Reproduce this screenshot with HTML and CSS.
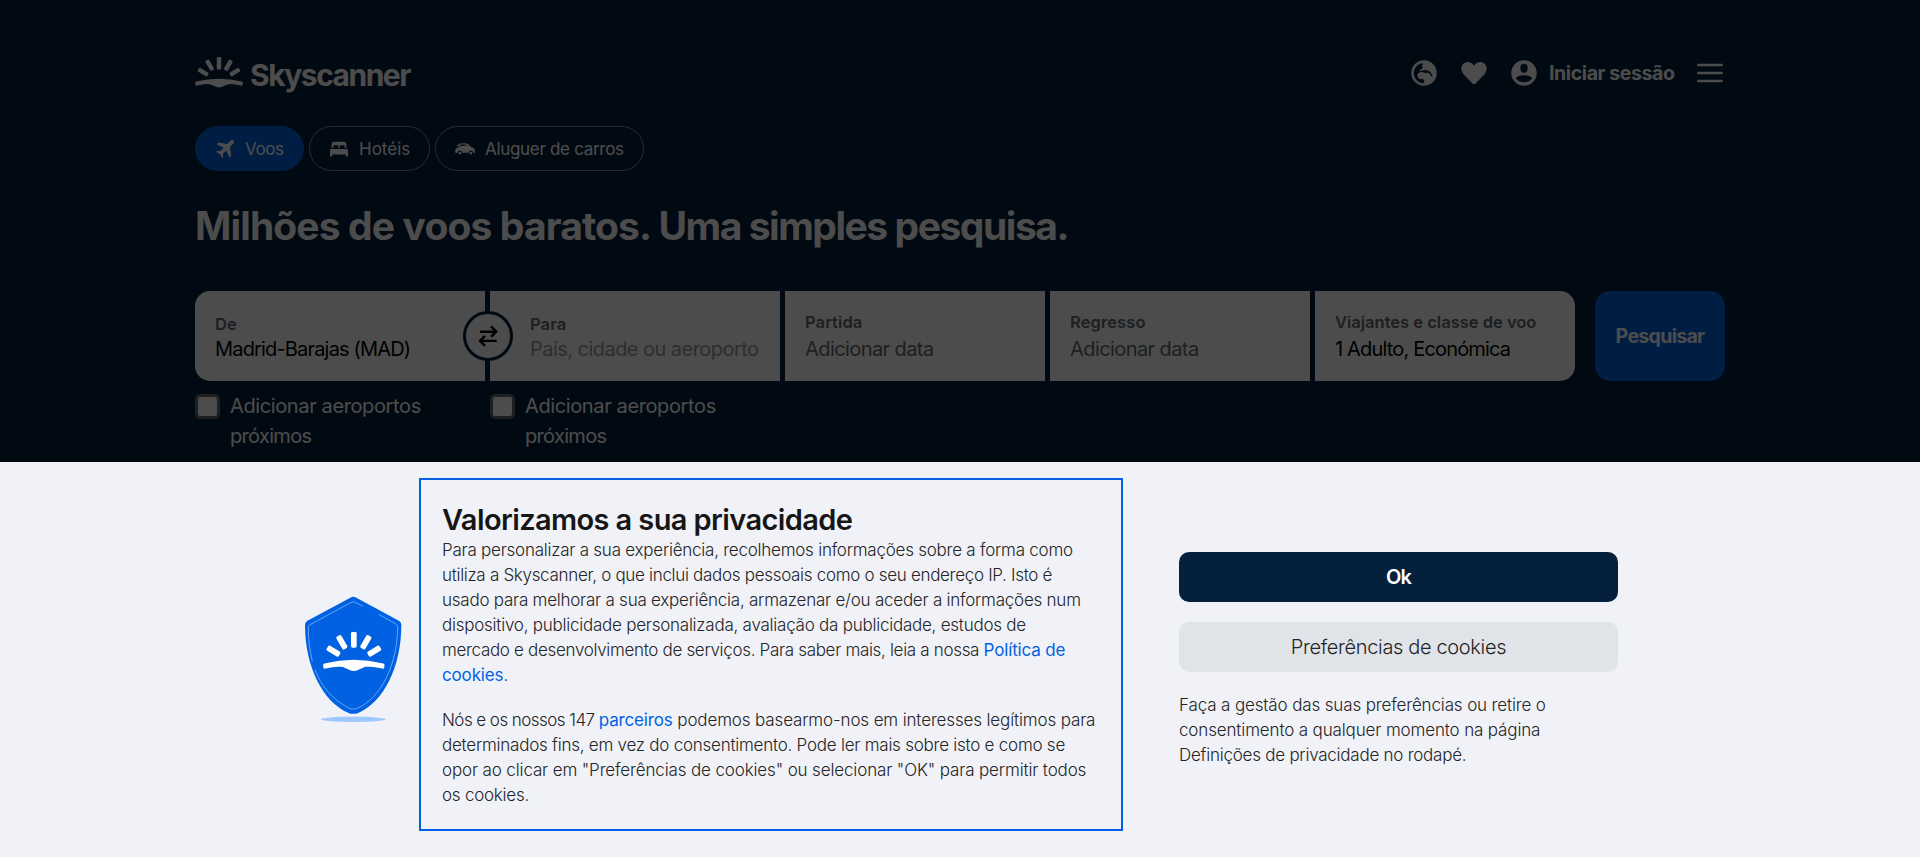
FILE: index.html
```html
<!DOCTYPE html>
<html lang="pt">
<head>
<meta charset="utf-8">
<title>Skyscanner</title>
<link rel="stylesheet" href="styles.css">
</head>
<body>
<svg class="defs" aria-hidden="true">
  <symbol id="sunrise" viewBox="0 0 48 31">
    <rect x="21.8" y="0" width="4.4" height="12.4" rx="1.2"/>
    <rect x="21.8" y=".3" width="4.4" height="11.4" rx="1.2" transform="translate(-9.3 2.200) rotate(-30 24 6)"/>
    <rect x="21.8" y=".3" width="4.4" height="11.4" rx="1.2" transform="translate(9.3 2.200) rotate(30 24 6)"/>
    <rect x="21.8" y=".5" width="4.4" height="11" rx="1.2" transform="translate(-15.800 9.100) rotate(-59 24 6)"/>
    <rect x="21.8" y=".5" width="4.4" height="11" rx="1.2" transform="translate(15.800 9.100) rotate(59 24 6)"/>
    <path d="M1.2 24.6Q24 18.9 46.8 24.6Q47.8 24.9 47.8 25.9L47.6 27.7Q47.3 29 46 28.6Q38.500 26.7 33.800 27.200C30 27.700 27.500 30.500 24 30.500S18 27.700 14.200 27.200Q9.500 26.700 2 28.600Q.7 29 .4 27.700L.2 25.900Q.2 24.900 1.200 24.600Z"/>
  </symbol>
</svg>

<div class="hero">
  <header class="header">
    <div class="logo">
      <svg class="logo-mark"><use href="#sunrise"/></svg>
      <span class="logo-text">Skyscanner</span>
    </div>
    <nav class="nav">
      <svg class="icon-lg" viewBox="0 0 24 24"><path fill-rule="evenodd" d="M12 1.800a10.200 10.200 0 1 0 0 20.400a10.200 10.200 0 0 0 0-20.400ZM3.800 12C3.800 8.200 6.500 5 10.300 4.100L11.300 4.800L10 6.300L11.300 7.200L9.600 9.200L8.400 9.300L8.200 10.300L14.300 9.300L14.900 10.400L17 10.800L18.900 14.500L18.300 15L15.700 12L12.300 11.700L9.800 10.900L7.600 12L6.600 13.500L7.300 15.700L9 16.700L11.300 16.800L12.200 18.400L12 20.200C7.500 20.300 3.800 16.600 3.800 12Z"/></svg>
      <svg class="icon-lg" viewBox="0 0 24 24"><path d="M12 21c-.5 0-.9-.2-1.300-.6L4 13.300C.7 9.800 1.600 5.500 4.300 4c2.600-1.500 5.900-.7 7.700 2.100c1.800-2.800 5.100-3.600 7.700-2.100c2.700 1.500 3.600 5.800.3 9.300l-6.700 7.100c-.4.400-.8.600-1.300.6Z"/></svg>
      <svg class="icon-lg" viewBox="0 0 24 24"><path fill-rule="evenodd" d="M12 1.800a10.200 10.200 0 1 0 0 20.400a10.200 10.200 0 0 0 0-20.400ZM12 4.600c1.900 0 2.900 1.100 2.900 2.800v1.400c0 1.700-1.200 3-2.900 3s-2.900-1.300-2.900-3V7.400c0-1.700 1-2.800 2.900-2.800ZM12 19.400c-2.800 0-5.200-1.200-6.600-3.100c.9-1.800 3.400-2.500 6.600-2.500s5.700.7 6.600 2.500c-1.400 1.900-3.800 3.100-6.600 3.100Z"/></svg>
      <span class="signin">Iniciar sessão</span>
      <svg class="icon-lg menu" viewBox="0 0 24 24"><path d="M2.700 5.600h18.600M2.700 12h18.600M2.700 18.400h18.600"/></svg>
    </nav>
  </header>

  <div class="pills">
    <div class="pill pill-on">
      <svg class="icon-sm" viewBox="0 0 20 20"><path d="M18.500 1.300C17.600.5 16.200.9 15.300 1.800L12.200 5L3.300 3.600L1.700 5.200L8.600 8.700L5.600 12.100L2.200 11.700L1 12.900L5 15.100L7.100 19L8.300 17.800L7.900 14.500L11.300 11.500L14.600 18.600L16.200 17L15 8L18.200 4.700C19 3.800 19.200 2.200 18.500 1.300Z"/></svg>
      <span>Voos</span>
    </div>
    <div class="pill hotels">
      <svg class="icon-sm" viewBox="0 0 20 20"><path d="M2.600 9V5.200C2.600 3.400 4 2.700 6 2.700H14C16 2.700 17.400 3.400 17.400 5.200V9H15.800V7.600C15.800 6.700 15.200 6.300 14.300 6.300H12C11.100 6.300 10.600 6.700 10.600 7.600V9H9.400V7.600C9.400 6.700 8.900 6.300 8 6.300H5.700C4.800 6.300 4.200 6.700 4.200 7.600V9ZM1 17.500V11.700C1 10.700 1.700 10 2.700 10H17.300C18.300 10 19 10.700 19 11.700V17.500H16.800V15.500H3.200V17.500Z"/></svg>
      <span>Hotéis</span>
    </div>
    <div class="pill cars">
      <svg class="icon-sm" viewBox="0 0 20 20"><path fill-rule="evenodd" d="M.2 11.600C.2 9.600 1.600 8.700 4 8.300L6 7.800C4.500 7.700 2.800 7.400 1.600 7.200C3 5.300 5 4.300 7.500 4.300H9.500C11.500 4.300 12.800 4.800 14 5.900L16.300 8.300C18.600 8.700 19.900 9.500 19.900 11.500V13.700H18A2.200 2.200 0 0 0 13.600 13.700H7.100A2.200 2.200 0 0 0 2.700 13.700H.2ZM3.600 6.600C6 7.200 9 7 12.300 6.600C11 5.700 10 5.500 8 5.500C6 5.500 4.700 5.900 3.600 6.600Z"/><circle cx="4.900" cy="14.100" r="1.400"/><circle cx="15.800" cy="14.100" r="1.400"/></svg>
      <span>Aluguer de carros</span>
    </div>
  </div>

  <h1 class="title">Milhões de voos baratos. <span>Uma simples pesquisa.</span></h1>

  <div class="search">
    <div class="field wide first">
      <span class="label">De</span>
      <span class="value filled mad">Madrid-Barajas (MAD)</span>
      <span class="swap"><svg viewBox="0 0 24 24"><path d="M5.500 8H19M15.500 3.800L19.600 8L15.500 12M19 16.500H5M8.600 12.500L4.600 16.500L8.600 20.500"/></svg></span>
    </div>
    <div class="field wide to">
      <span class="label">Para</span>
      <span class="value placeholder">País, cidade ou aeroporto</span>
    </div>
    <div class="field date">
      <span class="label">Partida</span>
      <span class="value">Adicionar data</span>
    </div>
    <div class="field date">
      <span class="label">Regresso</span>
      <span class="value">Adicionar data</span>
    </div>
    <div class="field date last">
      <span class="label class-label">Viajantes e classe de voo</span>
      <span class="value filled pax">1 Adulto, Económica</span>
    </div>
    <button class="submit">Pesquisar</button>
  </div>

  <div class="nearby">
    <label class="check"><span class="box"></span><span>Adicionar aeroportos<br><span class="near">próximos</span></span></label>
    <label class="check"><span class="box"></span><span>Adicionar aeroportos<br><span class="near">próximos</span></span></label>
  </div>
</div>

<section class="banner">
  <svg class="shield" viewBox="42 48 294 384">
    <ellipse cx="190" cy="418" rx="97" ry="8" fill="#9dc9ff"/>
    <path fill="#0062e3" d="M181 53Q190 48 199 53L328 123Q334 127 334 135C334 262 280 366 206 398Q190 405 174 398C100 366 45 262 45 135Q45 127 51 123Z"/>
    <path fill="none" stroke="#79b0f8" stroke-width="2.500" d="M67 243C59 210 55 180 55 142Q55 137 60 134L184 67Q190 63 196 67L219 79M266 103L318 132Q323 135 323 141C322 256 272 354 202 385Q190 390 178 385C130 360 93 320 75 268"/>
    <svg x="98" y="155" width="187" height="120" fill="#fff"><use href="#sunrise"/></svg>
  </svg>
  <div class="notice">
    <h2>Valorizamos a sua privacidade</h2>
    <p>Para personalizar a sua experiência, recolhemos informações sobre a forma como<br><span class="tight">utiliza a Skyscanner, o que inclui dados pessoais como o seu endereço IP. Isto é</span><br>usado para melhorar a sua experiência, armazenar e/ou aceder a informações num<br>dispositivo, publicidade personalizada, avaliação da publicidade, estudos de<br><span class="snug">mercado e desenvolvimento de serviços. Para saber mais, leia a nossa <a>Política de</a></span><br><a>cookies</a>.</p>
    <p><span class="digits">Nós e os nossos 147 </span><a>parceiros</a><span class="loose"> podemos basearmo-nos em interesses legítimos para</span><br>determinados fins, em vez do consentimento. Pode ler mais sobre isto e como se<br><span class="loose">opor ao clicar em "Preferências de cookies" ou selecionar "OK" para permitir todos</span><br>os cookies.</p>
  </div>
  <div class="actions">
    <button class="btn ok">Ok</button>
    <button class="btn prefs">Preferências de cookies</button>
    <p><span class="loose">Faça a gestão das suas preferências ou retire o<br>consentimento a qualquer momento na página</span><br>Definições de privacidade no rodapé.</p>
  </div>
</section>
</body>
</html>
```
FILE: styles.css
```css
* { box-sizing: border-box; }
body {
  margin: 0;
  height: 857px;
  overflow: hidden;
  display: flex;
  flex-direction: column;
  font-family: Inter, "Liberation Sans", sans-serif;
  background: #f1f2f8;
}
button { border: 0; padding: 0; font-family: inherit; }
.defs { display: none; }

.hero {
  position: relative;
  height: 462px;
  padding: 57px 195px 0;
  background: #05203c;
  color: #fff;
}
/* Dims the page behind the cookie banner */
.hero::after {
  content: "";
  position: absolute;
  z-index: 2;
  inset: 0;
  background: rgba(0, 0, 0, .7);
}

.header { display: flex; justify-content: space-between; height: 32px; }
.logo { display: flex; gap: 7px; }
.logo-mark { width: 48px; height: 31px; fill: #fff; }
.logo-text {
  margin-top: 3px;
  font-size: 30px;
  line-height: 30px;
  font-weight: 700;
  letter-spacing: -1.5px;
}
.nav { display: flex; align-items: center; gap: 20px; }
.icon-lg { width: 30px; height: 30px; fill: #fff; }
.menu { fill: none; stroke: #fff; stroke-width: 2.1; stroke-linecap: round; }
.signin {
  width: 126px;
  margin-left: -10px;
  font-size: 19.5px;
  font-weight: 700;
  letter-spacing: -.4px;
  white-space: nowrap;
}

.pills { display: flex; gap: 5px; margin-top: 37px; }
.pill {
  display: flex;
  align-items: center;
  gap: 10px;
  height: 45px;
  padding-left: 19px;
  border: 1px solid rgba(255, 255, 255, .5);
  border-radius: 23px;
  font-size: 17px;
  white-space: nowrap;
}
.pill-on { width: 109px; background: #0062e3; border-color: #0062e3; letter-spacing: -.4px; }
.hotels { width: 121px; }
.cars { width: 209px; letter-spacing: -.31px; }
.icon-sm { width: 20px; height: 20px; fill: #fff; }

.title {
  margin: 30px 0 40px;
  font-size: 39px;
  line-height: 50px;
  font-weight: 700;
  letter-spacing: -.86px;
}
.title span { letter-spacing: -1.45px; }

.search { display: flex; gap: 5px; }
.field {
  position: relative;
  display: flex;
  flex-direction: column;
  height: 90px;
  padding: 21px 0 0 20px;
  background: #fff;
  white-space: nowrap;
}
.wide { width: 290px; }
.to { padding-left: 40px; }
.date { width: 260px; padding-top: 19px; gap: 2px; }
.first { border-radius: 15px 0 0 15px; }
.last { border-radius: 0 15px 15px 0; }
.label {
  font-size: 16.5px;
  line-height: 25px;
  font-weight: 600;
  letter-spacing: .1px;
  color: #626971;
}
.class-label { letter-spacing: 0; }
.value { font-size: 20px; line-height: 25px; letter-spacing: -.58px; color: #626971; }
.filled { color: #000; }
.mad, .pax { letter-spacing: -.83px; }
.placeholder { color: #9a9a9a; letter-spacing: -.54px; }
.swap {
  position: absolute;
  z-index: 1;
  right: -28px;
  top: 20px;
  display: flex;
  align-items: center;
  justify-content: center;
  width: 50px;
  height: 50px;
  border: 3px solid #05203c;
  border-radius: 50%;
  background: #fff;
}
.swap svg {
  width: 26px;
  height: 26px;
  fill: none;
  stroke: #000;
  stroke-width: 2.3;
  stroke-linecap: round;
  stroke-linejoin: round;
}
.submit {
  width: 130px;
  margin-left: 15px;
  border-radius: 15px;
  background: #0062e3;
  color: #fff;
  font-size: 19.5px;
  font-weight: 700;
  letter-spacing: -.68px;
}

.nearby { display: flex; gap: 5px; margin-top: 10px; }
.check {
  display: flex;
  gap: 10px;
  width: 290px;
  font-size: 20px;
  line-height: 30px;
  letter-spacing: -.38px;
}
.near { letter-spacing: -.68px; }
.box {
  width: 25px;
  height: 25px;
  margin-top: 3px;
  border: 3px solid #626971;
  border-radius: 5px;
  background: #fff;
}

.banner {
  display: flex;
  align-items: flex-start;
  height: 395px;
  padding: 16px 0 0 304px;
  color: #242526;
}
.shield { width: 98px; height: 128px; margin-top: 118px; }
.notice {
  width: 704px;
  height: 353px;
  margin-left: 17px;
  padding: 22px 21px;
  border: 2px solid #0062e3;
}
h2 {
  margin: 0 0 1px;
  font-size: 29px;
  line-height: 35px;
  font-weight: 600;
  letter-spacing: -.6px;
  color: #161616;
}
p {
  margin: 0 0 20px;
  font-size: 17px;
  line-height: 25px;
  font-weight: 300;
  letter-spacing: -.24px;
  white-space: nowrap;
}
.tight { letter-spacing: -.306px; }
.snug { letter-spacing: -.32px; }
.loose { letter-spacing: -.14px; }
.digits { letter-spacing: -.55px; }
a { color: #0062e3; font-weight: 400; letter-spacing: -.15px; }
.actions { display: flex; flex-direction: column; gap: 20px; width: 439px; margin: 74px 0 0 56px; }
.actions p { margin-top: 1px; }
.btn { height: 50px; border-radius: 10px; font-size: 20px; }
.ok { background: #05203c; color: #fff; font-weight: 600; letter-spacing: -1px; }
.prefs { background: #e0e3e8; color: #242526; font-weight: 300; letter-spacing: -.35px; }
```
